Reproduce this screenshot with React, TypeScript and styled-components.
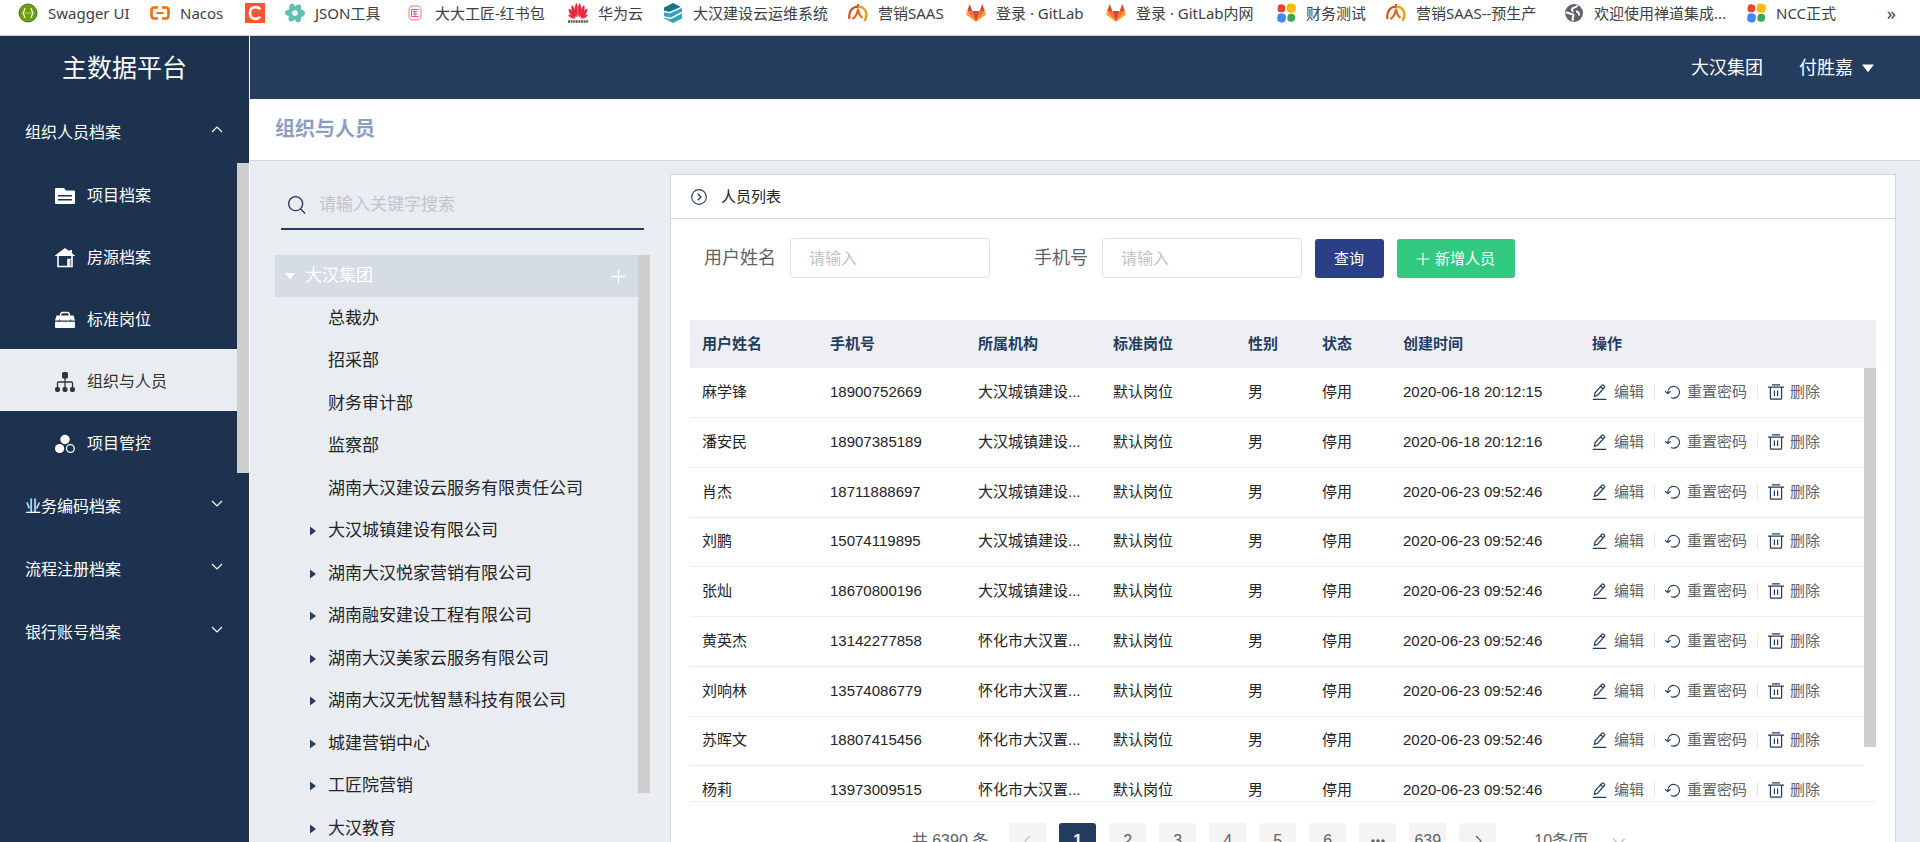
import React from 'react';
import styled, { createGlobalStyle, css } from 'styled-components';

const color = {
  navy: '#243d5e',
  sidebar: '#1d324e',
  page: '#e9edf2',
  line: '#d3d7e2',
  rowLine: '#ebeef5',
  thumb: '#cfcfcf',
  text: '#222426',
  muted: '#606266',
  placeholder: '#c0c4cc',
};

const GlobalStyle = createGlobalStyle`
  * { box-sizing: border-box; }
  body {
    margin: 0;
    color: ${color.text};
    font: 15px/20px "Liberation Sans", "Noto Sans CJK SC", sans-serif;
  }
  button, input, select { font: inherit; color: inherit; margin: 0; }
  button { border: 0; padding: 0; background: none; cursor: pointer; }
  a { color: inherit; text-decoration: none; }
  ul { list-style: none; margin: 0; padding: 0; }
  h1, h2, h3 { margin: 0; font-weight: 400; }
  svg { display: block; flex: none; }
`;

/* ---------- page frame ---------- */

const Page = styled.div`
  display: flex;
  flex-direction: column;
  height: 100vh;
  overflow: hidden;
  background: ${color.page};
`;

const Shell = styled.div`
  display: flex;
  flex: 1;
  min-height: 0;
`;

const Main = styled.main`
  display: flex;
  flex-direction: column;
  flex: 1;
  min-width: 0;
  border-left: 1px solid #fff;
`;

const Thumb = styled.div<{ $height?: number }>`
  flex: none;
  width: 12px;
  height: ${(p) => (p.$height ? `${p.$height}px` : 'auto')};
  background: ${color.thumb};
`;

/* ---------- bookmarks ---------- */

const Bookmarks = styled.nav`
  display: flex;
  align-items: center;
  flex: none;
  gap: 20px;
  height: 36px;
  padding: 0 24px 10px 18px;
  border-bottom: 1px solid #d0d3d7;
  background: #fff;
  color: #3c4043;
  font-family: "Noto Sans", "Noto Sans CJK SC", sans-serif;
  white-space: nowrap;
`;

const Bookmark = styled.a<{ $label: number }>`
  display: flex;
  align-items: center;
  flex: none;
  gap: 10px;

  span { width: ${(p) => p.$label}px; }
`;

const More = styled.button`
  margin-left: auto;
  font-size: 18px;
  line-height: 18px;
`;

/* ---------- sidebar ---------- */

const Sidebar = styled.aside`
  flex: none;
  width: 249px;
  background: ${color.sidebar};
  color: #fff;
  font-size: 16px;
`;

const Brand = styled.h1`
  height: 64px;
  font-size: 25px;
  line-height: 64px;
  text-align: center;
`;

const GroupButton = styled.button`
  display: flex;
  align-items: center;
  justify-content: space-between;
  width: 100%;
  height: 63px;
  padding: 2px 26px 0 25px;

  svg { margin-bottom: 8px; }
`;

const SubMenu = styled.div`
  display: flex;
  padding-bottom: 1px;

  ul { flex: 1; }
`;

const SubLink = styled.a<{ $active?: boolean }>`
  display: flex;
  align-items: center;
  gap: 12px;
  height: 62px;
  padding: 4px 0 0 55px;
  ${(p) => p.$active && css`
    background: ${color.page};
    color: #333;
  `}
`;

/* ---------- header ---------- */

const TopBar = styled.header`
  display: flex;
  align-items: center;
  justify-content: flex-end;
  flex: none;
  gap: 36px;
  height: 63px;
  padding-right: 46px;
  background: ${color.navy};
  color: #fff;
  font-size: 18px;
`;

const UserButton = styled.button`
  display: flex;
  align-items: center;
  gap: 9px;
`;

const TitleBar = styled.div`
  flex: none;
  height: 62px;
  padding-left: 25px;
  border-bottom: 1px solid ${color.line};
  background: #fff;

  h2 {
    color: #8b9fc1;
    font-size: 20px;
    font-weight: 700;
    line-height: 61px;
  }
`;

const Content = styled.div`
  display: flex;
  flex: 1;
  gap: 18px;
  min-height: 0;
  padding: 13px 24px 0 25px;
`;

/* ---------- organisation tree ---------- */

const TreePane = styled.section`
  flex: none;
  width: 377px;
  padding-right: 1px;
  border-right: 1px solid #eff0f3;
  font-size: 17px;
`;

const SearchBox = styled.label`
  display: flex;
  align-items: center;
  gap: 13px;
  height: 56px;
  margin: 0 6px 25px;
  padding: 7px 7px 0;
  border-bottom: 2px solid ${color.navy};

  input {
    flex: 1;
    min-width: 0;
    height: 32px;
    padding: 0;
    border: 0;
    outline: 0;
    background: none;
  }
  input::placeholder { color: ${color.placeholder}; opacity: 1; }
`;

const TreeBody = styled.div`
  display: flex;
  align-items: flex-start;
`;

const TreeList = styled.div`
  flex: 1;
  min-width: 0;
`;

const TreeRoot = styled.div`
  display: flex;
  align-items: center;
  height: 42px;
  padding: 0 12px 0 10px;
  background: #d5dce4;
  color: #fff;

  span { flex: 1; margin-left: 10px; }
`;

const TreeNode = styled.li`
  display: flex;
  align-items: center;
  height: 42px;
  padding: 1px 0 0 35px;

  &:nth-child(even) { height: 43px; }
`;

const NodeCaret = styled.span`
  display: flex;
  width: 18px;
`;

/* ---------- people panel ---------- */

const Panel = styled.section`
  flex: 1;
  min-width: 0;
  border: 1px solid ${color.line};
  border-bottom: 0;
  background: #fff;
`;

const PanelHead = styled.div`
  display: flex;
  align-items: center;
  gap: 14px;
  height: 44px;
  padding-left: 20px;
  border-bottom: 1px solid ${color.line};

  h3 { font-size: 15px; }
`;

const Filters = styled.form`
  display: flex;
  align-items: flex-end;
  padding: 19px 33px 42px;
`;

const Field = styled.label`
  display: flex;
  align-items: center;
  gap: 14px;
  color: ${color.muted};
  font-size: 18px;

  & + & { margin-left: 44px; }

  input {
    width: 200px;
    height: 40px;
    padding: 1px 18px 0;
    border: 1px solid #dcdfe6;
    border-radius: 4px;
    outline: 0;
    font-size: 16px;
  }
  input::placeholder { color: ${color.placeholder}; opacity: 1; }
`;

const ActionButton = styled.button<{ $tone: string }>`
  display: flex;
  align-items: center;
  gap: 5px;
  height: 39px;
  margin-left: 13px;
  padding: 0 20px 0 19px;
  border-radius: 3px;
  background: ${(p) => p.$tone};
  color: #fff;
`;

const TableBox = styled.div`
  height: 482px;
  margin: 0 19px 21px;
  border-bottom: 1px solid ${color.rowLine};
  overflow: hidden;
`;

const Table = styled.table`
  width: 100%;
  table-layout: fixed;
  border-collapse: separate;
  border-spacing: 0;
  white-space: nowrap;

  th, td { padding: 0 12px; text-align: left; }
  thead tr { height: 48px; background: #eeeff5; }
  th { color: ${color.navy}; font-weight: 700; }
  tbody tr { height: 50px; }
  tbody tr:nth-child(4n) { height: 49px; }
  tbody td { padding-bottom: 2px; border-bottom: 1px solid ${color.rowLine}; }
  thead td, td[rowspan] { padding: 0; border: 0; vertical-align: top; }
`;

const RowActions = styled.div`
  display: flex;
  align-items: center;
  color: ${color.muted};
`;

const RowAction = styled.button`
  display: flex;
  align-items: center;
  gap: 6px;

  svg { color: ${color.navy}; }

  & + & { margin-left: 10px; }
  & + &::before {
    content: "";
    width: 1px;
    height: 15px;
    margin-right: 4px;
    background: #e4e7ed;
  }
`;

const Pager = styled.nav`
  display: flex;
  align-items: center;
  justify-content: center;
  gap: 13px;
  color: ${color.muted};
  font-size: 16px;
`;

const Total = styled.span`
  margin-right: 8px;
`;

const PageButton = styled.button<{ $active?: boolean }>`
  display: flex;
  align-items: center;
  justify-content: center;
  width: 37px;
  height: 35px;
  border-radius: 3px;
  background: ${(p) => (p.$active ? color.navy : '#f4f4f5')};
  color: ${(p) => (p.$active ? '#fff' : color.muted)};
  font-weight: ${(p) => (p.$active ? 700 : 400)};

  &:disabled { color: ${color.placeholder}; }
`;

const SizePicker = styled.label`
  display: flex;
  position: relative;
  width: 145px;

  select {
    width: 100%;
    height: 35px;
    padding: 0 0 0 25px;
    border: 0;
    outline: 0;
    background: none;
    appearance: none;
  }
  svg { position: absolute; top: 11px; right: 28px; color: ${color.placeholder}; }
`;

/* ---------- drawings ---------- */

type Glyph = () => React.ReactElement;

const Ico = ({ s = 20, children }: { s?: number; children: React.ReactNode }) => (
  <svg width={s} height={s} viewBox="0 0 20 20" fill="none" aria-hidden="true">{children}</svg>
);

const Chevron = ({ dir, w = 12 }: { dir: 'up' | 'down' | 'left' | 'right'; w?: number }) => {
  const d = { up: 'M1 9l5-5 5 5', down: 'M1 4l5 5 5-5', left: 'M8 1L3 6l5 5', right: 'M4 1l5 5-5 5' }[dir];
  return (
    <svg width={w} height={w} viewBox="0 0 12 12" fill="none" stroke="currentColor" strokeWidth="1.2" aria-hidden="true">
      <path d={d} />
    </svg>
  );
};

const Swagger: Glyph = () => (
  <Ico>
    <circle cx="10" cy="10" r="9" fill="#6a9f10" stroke="#4d7a0a" />
    <path d="M7.5 5.5C5.5 5.5 6.8 9 5 10c1.800 1 .5 4.500 2.500 4.500M12.500 5.500c2 0 .7 3.500 2.500 4.500-1.800 1-.5 4.500-2.500 4.500" stroke="#fff" strokeWidth="1.300" />
    <path d="M7.500 10h1M9.600 10h1M11.600 10h1" stroke="#fff" strokeWidth="1.200" />
  </Ico>
);
const NacosMark: Glyph = () => (
  <Ico>
    <path d="M8 4.500H4.500Q1.500 4.500 1.500 7.500v5q0 3 3 3H8M12 4.500h3.500q3 0 3 3v5q0 3-3 3H12" stroke="#ff6a00" strokeWidth="2.600" />
    <path d="M6.500 10h7" stroke="#ff6a00" strokeWidth="2" />
  </Ico>
);
const RedC: Glyph = () => (
  <Ico>
    <path d="M0 0h20v20H0z" fill="#fc5531" />
    <path d="M15 6.500C13.500 3.300 5 2.500 5 10s8.500 6.700 10 3.500" stroke="#fff" strokeWidth="2.600" />
  </Ico>
);
const Gear: Glyph = () => (
  <Ico>
    <path
      fill="#5fc0ae"
      fillRule="evenodd"
      d="M5.500 1q3-1.500 4.500 2.500Q12.500.5 15.500 2q1.500 2 .3 4.500 4.200.5 4.200 3.500t-4 4q1 3.500-1.500 5-3.500 1-4.500-2.500-2.500 3-5.500 1.500-2-2-.5-5Q0 12.500 0 9.500q.5-3 4.500-3-1-3.500 1-5.500zM10 7.200a2.800 2.800 0 1 0 0 5.600 2.800 2.800 0 0 0 0-5.600z"
    />
  </Ico>
);
const Seal: Glyph = () => (
  <Ico>
    <rect x="4" y="3" width="12" height="14" rx="4" stroke="#f59a9d" strokeWidth="1.300" />
    <path d="M13.500 6.500h-7v7h7M8 8.500h4M8 11h4M10 8v5" stroke="#ee5a60" />
  </Ico>
);
const Huawei: Glyph = () => (
  <Ico>
    <g fill="#e8283c">
      <path d="M9.600 14C6.500 10 5.500 4 8.500 0c1.700 2 1.600 9 1.100 14zM10.400 14c3.100-4 4.100-10 1.100-14-1.700 2-1.600 9-1.100 14z" />
      <path d="M8.800 14.200C4.500 11.500 2 6 4 2 6.500 4.500 8.300 9.500 8.800 14.200zM11.200 14.200C15.500 11.500 18 6 16 2c-2.500 2.500-4.300 7.500-4.800 12.200z" />
      <path d="M8 14.500C3.500 13.500 0 10 .8 5.500c3.200 1.500 6 5.500 7.200 9zM12 14.500c4.500-1 8-4.500 7.200-9-3.200 1.500-6 5.500-7.200 9z" />
      <path d="M7.600 15.200C4.500 16 1.500 15 0 11.500c3 0 5.700 1.700 7.600 3.700zM12.400 15.200c3.100.8 6.100-.2 7.600-3.700-3 0-5.700 1.700-7.600 3.700z" />
    </g>
    <path d="M0 18.500h20" stroke="#6a5457" strokeWidth="2.400" strokeDasharray="2 .6" />
  </Ico>
);
const Cloud: Glyph = () => (
  <Ico>
    <path d="M10 0l9 4.500v3L9 12.500l-8-3v-5z" fill="#1b7486" />
    <path d="M1 9.500L19 6v9.500L10 20l-9-4.500z" fill="#35a3b8" />
    <path d="M1 8.500l5.500 1.300L19 4.200M1 14l6.500 1.500L19 9.500" stroke="#fff" strokeWidth="1.500" />
  </Ico>
);
const Saas: Glyph = () => (
  <Ico>
    <path d="M10 1v4M1.500 16C0 8 5 3.500 10 3.500" stroke="#d2541c" strokeWidth="2.200" />
    <path d="M10 3.500c7 0 11 7 6.500 14.500" stroke="#e9a01f" strokeWidth="2.500" />
    <path d="M4.500 16C8 13.500 9.800 10 10 5.500 10.500 10 12 13 14.500 15" stroke="#d96c1e" strokeWidth="2.200" />
  </Ico>
);
const Gitlab: Glyph = () => (
  <Ico>
    <path d="M10 19L6.300 8h7.400z" fill="#e24329" />
    <path d="M10 19L1.200 8h5.100zM10 19l8.800-11h-5.100z" fill="#fc6d26" />
    <path d="M1.200 8L0 11.500 10 19zM18.800 8l1.200 3.500L10 19z" fill="#fca326" />
    <path d="M1.200 8L3.700 1l2.600 7zM18.800 8l-2.500-7-2.600 7z" fill="#e24329" />
  </Ico>
);
const Pinwheel: Glyph = () => (
  <Ico>
    <g transform="rotate(8 10 10)">
      <rect x="1" y="2" width="7.600" height="8" rx="3.400" fill="#ea4335" />
      <rect x="10" y="0" width="9" height="9" rx="3.800" fill="#fbbc04" />
      <rect x="2" y="11" width="8.500" height="9" rx="3.800" fill="#4285f4" />
      <rect x="12" y="10" width="7.600" height="8" rx="3.500" fill="#34a853" />
    </g>
  </Ico>
);
const Globe: Glyph = () => (
  <Ico>
    <circle cx="10" cy="10" r="9" fill="#5f6368" />
    <path d="M13.500 2.500c-1 2.500-5 1.500-5.500 3.500-.5 1.500 1 2 .5 3M1.500 9.500c3-.5 3.500 1.500 6 1.500 2 0 2.500 1.500 1.500 3s-.5 2.500.5 3.500M12 8.500c2 0 3.500 1.500 3 4" stroke="#fff" strokeWidth="2" />
  </Ico>
);

const Folder: Glyph = () => (
  <Ico>
    <path fillRule="evenodd" fill="currentColor" d="M1 2h8l2 2.500h8q1 0 1 1V17q0 1-1 1H1q-1 0-1-1V3q0-1 1-1zm2 7v1.500h14V9zm0 4v1.500h14V13z" />
  </Ico>
);
const House: Glyph = () => (
  <Ico>
    <path d="M10 0l4.500 3.300V2H17v3.200L20.500 8H-.5z" fill="currentColor" />
    <path d="M3 7.500V18.500h14V7.500M13.200 18v-6.500h2.500" stroke="currentColor" strokeWidth="1.600" />
    <path d="M12.500 11h3v7.500h-3z" fill="currentColor" fillOpacity=".85" />
  </Ico>
);
const Briefcase: Glyph = () => (
  <Ico>
    <path d="M5.500 6q0-3.500 2-3.500h5q2 0 2 3.500" stroke="currentColor" strokeWidth="1.300" />
    <path d="M1.500 5.500h17L20 10.500H0zM0 11.800h20V17q0 1-1 1H1q-1 0-1-1z" fill="currentColor" />
    <path d="M4.500 9.500v1.500M15.500 9.500v1.500" stroke="#1d324e" />
  </Ico>
);
const OrgChart: Glyph = () => (
  <Ico>
    <g fill="currentColor">
      <rect x="7" y="0" width="6" height="6.500" rx="1.500" />
      <rect x="0" y="15" width="5" height="5" rx="2" /><rect x="7.500" y="15" width="5" height="5" rx="2" /><rect x="15" y="15" width="5" height="5" rx="2" />
    </g>
    <path d="M10 6v9M2.500 15v-4q0-1 1-1h13q1 0 1 1v4" stroke="currentColor" strokeWidth="1.300" />
  </Ico>
);
const Circles: Glyph = () => (
  <Ico>
    <circle cx="10" cy="5.500" r="4.700" fill="currentColor" />
    <circle cx="4.600" cy="14.500" r="4.600" fill="currentColor" />
    <circle cx="15.400" cy="14.500" r="3.900" stroke="currentColor" strokeWidth="1.300" />
  </Ico>
);

const SearchIcon: Glyph = () => (
  <Ico s={18}><circle cx="8.500" cy="8.500" r="7.800" stroke="#243d5e" strokeWidth="1.500" /><path d="M14 14.500l5 5" stroke="#243d5e" strokeWidth="1.500" /></Ico>
);
const Caret = ({ w }: { w: number }) => (
  <svg width={w} height={w} viewBox="0 0 10 10" aria-hidden="true"><path d="M0 2h10L5 8.500z" fill="currentColor" /></svg>
);
const SideCaret: Glyph = () => (
  <svg width="6" height="10" viewBox="0 0 6 10" aria-hidden="true"><path d="M0 .5v9L6 5z" fill="#243d5e" /></svg>
);
const Plus = ({ s }: { s: number }) => (
  <Ico s={s}><path d="M10 1v18M1 10h18" stroke="currentColor" strokeWidth="1.700" /></Ico>
);
const CircleArrow: Glyph = () => (
  <Ico s={16}><circle cx="10" cy="10" r="9.200" stroke="#243d5e" strokeWidth="1.400" /><path d="M8.500 6l4 4-4 4" stroke="#243d5e" strokeWidth="1.600" /></Ico>
);
const Pencil: Glyph = () => (
  <Ico s={16}>
    <path d="M3 15.500l.8-4.500L12.500 1.500q.8-.8 1.700 0l1.300 1.200q.8.8 0 1.700L7 14zM10.800 3.500l3 2.800M1 19.200h17" stroke="currentColor" strokeWidth="1.500" />
  </Ico>
);
const Reset: Glyph = () => (
  <Ico s={16}>
    <path d="M3.500 11.500V10a7.300 7.300 0 1 1 4 6.800M0 9l3.500 3L7 9" stroke="currentColor" strokeWidth="1.400" />
  </Ico>
);
const Trash: Glyph = () => (
  <Ico s={16}>
    <path d="M0 4h20M5 1h10M3 4v14q0 1 1 1h12q1 0 1-1V4M8 8v7M12 8v7" stroke="currentColor" strokeWidth="1.500" />
  </Ico>
);

/* ---------- data ---------- */

const bookmarks: { icon: Glyph; text: string; label: number }[] = [
  { icon: Swagger, text: 'Swagger UI', label: 82 },
  { icon: NacosMark, text: 'Nacos', label: 45 },
  { icon: RedC, text: '', label: 0 },
  { icon: Gear, text: 'JSON工具', label: 70 },
  { icon: Seal, text: '大大工匠-红书包', label: 113 },
  { icon: Huawei, text: '华为云', label: 45 },
  { icon: Cloud, text: '大汉建设云运维系统', label: 135 },
  { icon: Saas, text: '营销SAAS', label: 68 },
  { icon: Gitlab, text: '登录 · GitLab', label: 90 },
  { icon: Gitlab, text: '登录 · GitLab内网', label: 120 },
  { icon: Pinwheel, text: '财务测试', label: 60 },
  { icon: Saas, text: '营销SAAS--预生产', label: 128 },
  { icon: Globe, text: '欢迎使用禅道集成...', label: 132 },
  { icon: Pinwheel, text: 'NCC正式', label: 62 },
];

const subItems: { icon: Glyph; text: string }[] = [
  { icon: Folder, text: '项目档案' },
  { icon: House, text: '房源档案' },
  { icon: Briefcase, text: '标准岗位' },
  { icon: OrgChart, text: '组织与人员' },
  { icon: Circles, text: '项目管控' },
];

const closedGroups = ['业务编码档案', '流程注册档案', '银行账号档案'];

const leaves = ['总裁办', '招采部', '财务审计部', '监察部', '湖南大汉建设云服务有限责任公司'];
const branches = [
  '大汉城镇建设有限公司', '湖南大汉悦家营销有限公司', '湖南融安建设工程有限公司', '湖南大汉美家云服务有限公司',
  '湖南大汉无忧智慧科技有限公司', '城建营销中心', '工匠院营销', '大汉教育',
];

const columns: [string, number][] = [
  ['用户姓名', 128], ['手机号', 148], ['所属机构', 135], ['标准岗位', 135],
  ['性别', 74], ['状态', 81], ['创建时间', 189], ['操作', 284],
];

const town = '大汉城镇建设...';
const huaihua = '怀化市大汉置...';
const people = [
  ['麻学锋', '18900752669', town, '2020-06-18 20:12:15'],
  ['潘安民', '18907385189', town, '2020-06-18 20:12:16'],
  ['肖杰', '18711888697', town, '2020-06-23 09:52:46'],
  ['刘鹏', '15074119895', town, '2020-06-23 09:52:46'],
  ['张灿', '18670800196', town, '2020-06-23 09:52:46'],
  ['黄英杰', '13142277858', huaihua, '2020-06-23 09:52:46'],
  ['刘响林', '13574086779', huaihua, '2020-06-23 09:52:46'],
  ['苏晖文', '18807415456', huaihua, '2020-06-23 09:52:46'],
  ['杨莉', '13973009515', huaihua, '2020-06-23 09:52:46'],
];

/* ---------- sections ---------- */

const BookmarkBar = () => (
  <Bookmarks>
    {bookmarks.map(({ icon: Icon, text, label }, i) => (
      <Bookmark key={i} href="#" $label={label}>
        <Icon />
        {text && <span>{text}</span>}
      </Bookmark>
    ))}
    <More>»</More>
  </Bookmarks>
);

const SideNav = () => (
  <Sidebar>
    <Brand>主数据平台</Brand>
    <GroupButton aria-expanded="true">组织人员档案<Chevron dir="up" /></GroupButton>
    <SubMenu>
      <ul>
        {subItems.map(({ icon: Icon, text }) => (
          <li key={text}>
            <SubLink href="#" $active={text === '组织与人员'}><Icon />{text}</SubLink>
          </li>
        ))}
      </ul>
      <Thumb />
    </SubMenu>
    {closedGroups.map((g) => (
      <GroupButton key={g} aria-expanded="false">{g}<Chevron dir="down" /></GroupButton>
    ))}
  </Sidebar>
);

const OrgTree = () => (
  <TreePane>
    <SearchBox>
      <SearchIcon />
      <input placeholder="请输入关键字搜索" />
    </SearchBox>
    <TreeBody>
      <TreeList>
        <TreeRoot>
          <Caret w={10} />
          <span>大汉集团</span>
          <button aria-label="新增"><Plus s={15} /></button>
        </TreeRoot>
        <ul>
          {leaves.map((n) => <TreeNode key={n}><NodeCaret />{n}</TreeNode>)}
          {branches.map((n) => <TreeNode key={n}><NodeCaret><SideCaret /></NodeCaret>{n}</TreeNode>)}
        </ul>
      </TreeList>
      <Thumb $height={538} />
    </TreeBody>
  </TreePane>
);

const PeopleTable = () => (
  <TableBox>
    <Table>
      <colgroup>
        {columns.map(([name, w]) => <col key={name} width={w} />)}
        <col width={12} />
      </colgroup>
      <thead>
        <tr>
          {columns.map(([name]) => <th key={name} scope="col">{name}</th>)}
          <td aria-hidden="true" />
        </tr>
      </thead>
      <tbody>
        {people.map(([name, phone, org, time], i) => (
          <tr key={phone}>
            <td>{name}</td>
            <td>{phone}</td>
            <td>{org}</td>
            <td>默认岗位</td>
            <td>男</td>
            <td>停用</td>
            <td>{time}</td>
            <td>
              <RowActions>
                <RowAction><Pencil />编辑</RowAction>
                <RowAction><Reset />重置密码</RowAction>
                <RowAction><Trash />删除</RowAction>
              </RowActions>
            </td>
            {i === 0 && <td rowSpan={people.length} aria-hidden="true"><Thumb $height={379} /></td>}
          </tr>
        ))}
      </tbody>
    </Table>
  </TableBox>
);

const Pagination = () => (
  <Pager>
    <Total>共 6390 条</Total>
    <PageButton disabled aria-label="上一页"><Chevron dir="left" /></PageButton>
    {['1', '2', '3', '4', '5', '6'].map((n) => <PageButton key={n} $active={n === '1'}>{n}</PageButton>)}
    <PageButton aria-label="更多">
      <svg width="14" height="4" viewBox="0 0 14 4" fill="currentColor" aria-hidden="true">
        <circle cx="2" cy="2" r="1.700" /><circle cx="7" cy="2" r="1.700" /><circle cx="12" cy="2" r="1.700" />
      </svg>
    </PageButton>
    <PageButton>639</PageButton>
    <PageButton aria-label="下一页"><Chevron dir="right" /></PageButton>
    <SizePicker>
      <select aria-label="每页条数" defaultValue="10"><option value="10">10条/页</option></select>
      <Chevron dir="down" w={14} />
    </SizePicker>
  </Pager>
);

export default function App() {
  return (
    <>
      <GlobalStyle />
      <Page>
        <BookmarkBar />
        <Shell>
          <SideNav />
          <Main>
            <TopBar>
              <span>大汉集团</span>
              <UserButton>付胜嘉<Caret w={12} /></UserButton>
            </TopBar>
            <TitleBar><h2>组织与人员</h2></TitleBar>
            <Content>
              <OrgTree />
              <Panel>
                <PanelHead><CircleArrow /><h3>人员列表</h3></PanelHead>
                <Filters onSubmit={(e) => e.preventDefault()}>
                  <Field>用户姓名<input placeholder="请输入" /></Field>
                  <Field>手机号<input placeholder="请输入" /></Field>
                  <ActionButton $tone="#2a3f87">查询</ActionButton>
                  <ActionButton type="button" $tone="#32c981"><Plus s={14} />新增人员</ActionButton>
                </Filters>
                <PeopleTable />
                <Pagination />
              </Panel>
            </Content>
          </Main>
        </Shell>
      </Page>
    </>
  );
}
